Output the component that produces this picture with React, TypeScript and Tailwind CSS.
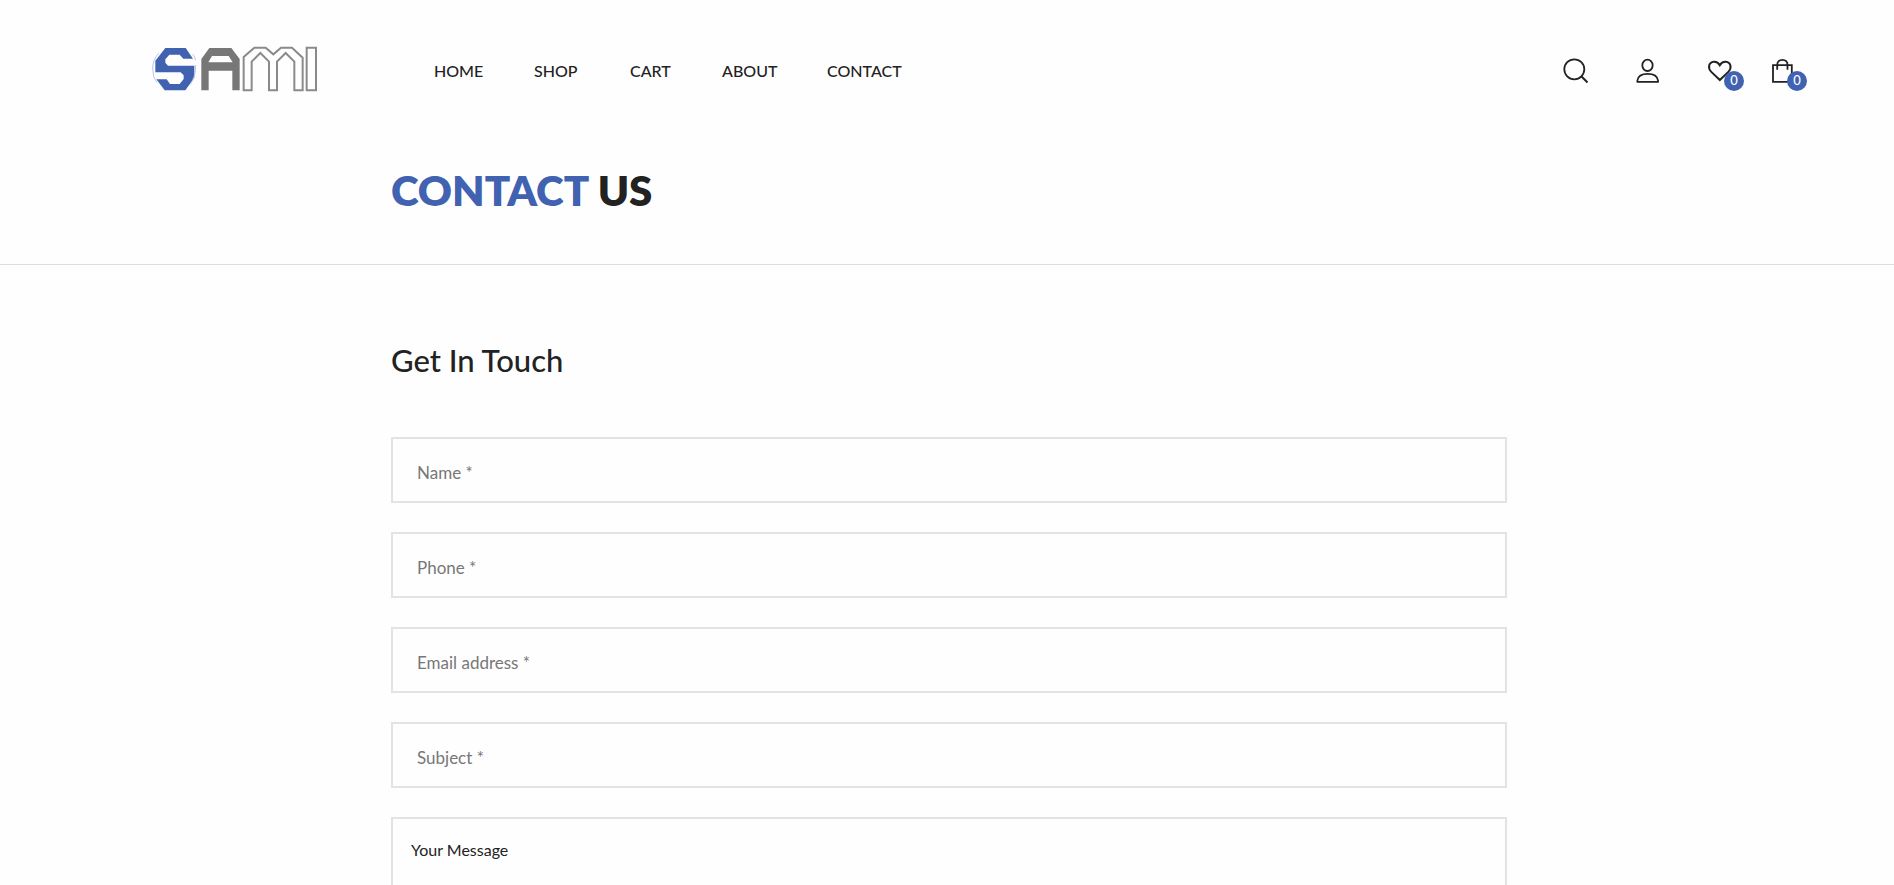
import React from "react";

const navItems = ["HOME", "SHOP", "CART", "ABOUT", "CONTACT"];

const fields = [
  { id: "name", label: "Name *", type: "text" },
  { id: "phone", label: "Phone *", type: "tel" },
  { id: "email", label: "Email address *", type: "email" },
  { id: "subject", label: "Subject *", type: "text" },
];

function Logo() {
  return (
    <svg viewBox="0 0 570 210" className="h-[70px] w-[190px]" aria-hidden="true">
      <path
        fill="#4062b1"
        d="M76 39H137L159 71H130L119 59H88L76 73V83L84 92H163V128L136 166H74L49 133H80L90 147H119L131 132V121L122 112H46V77Z"
      />
      <path fill="none" stroke="#b9c6e6" strokeWidth="3" d="M56 55Q38 74 38 102Q38 126 50 142M158 58Q165 66 167 76M167 90Q168 125 150 149" />
      <path
        fill="#777"
        fillRule="evenodd"
        d="M184 166V72L208 39H274L299 72V166H277V107H206V166ZM205 82H278L266 63H216Z"
      />
      <path
        fill="none"
        stroke="#8a8a8a"
        strokeWidth="6"
        d="M311 166V66L343 38H377L400 58L423 38H456L488 68V166H463V80L437 54L411 80V166H387V80L361 54L335 80V166ZM500 38H528V166H500Z"
      />
    </svg>
  );
}

function Badge() {
  return (
    <span className="absolute top-3 left-[17px] flex size-5 items-center justify-center rounded-full bg-[#4062b1] text-[13px] font-medium text-white">
      0
    </span>
  );
}

function Icon({ children }: { children: React.ReactNode }) {
  return (
    <svg viewBox="0 0 24 24" className="size-6 overflow-visible" fill="none" stroke="#222" strokeWidth="1.8" aria-hidden="true">
      {children}
    </svg>
  );
}

export default function App() {
  return (
    <div className="min-h-screen bg-[#fefefe] font-[Lato,sans-serif] text-[#222]">
      <header className="flex h-[140px] items-center pr-[100px] pl-[140px]">
        <a href="#home" aria-label="Sami">
          <Logo />
        </a>
        <nav className="ml-[104px] grid grid-cols-[100px_96px_92px_105px_auto] pt-0.5 text-base font-medium">
          {navItems.map((item) => (
            <a key={item} href={"#" + item.toLowerCase()}>
              {item}
            </a>
          ))}
        </nav>
        <div className="ml-auto flex gap-12 pt-0.5">
          <button type="button" aria-label="Search">
            <Icon>
              <circle cx="11.3" cy="10.3" r="10" />
              <path strokeWidth="2" d="M18.3 17.3L24.5 23.5" />
            </Icon>
          </button>
          <a href="#account" aria-label="Account">
            <Icon>
              <ellipse cx="12.5" cy="6.3" rx="5.2" ry="5.7" />
              <path strokeLinejoin="round" d="M2.4 22.9V21.5C3 17 7 14.8 12.7 14.8S22.4 17 23 21.5V22.9Z" />
            </Icon>
          </a>
          <div className="flex gap-[39px]">
            <a href="#wishlist" aria-label="Wishlist" className="relative">
              <Icon>
                <path
                  strokeWidth="2"
                  d="M12.8 21L4.3 12.9C.5 9.1 1.6 3.2 6.8 2.7C9.6 2.5 11.6 4 12.8 6.2C14 4 16 2.5 18.8 2.7C24 3.2 25.1 9.1 21.3 12.9Z"
                />
              </Icon>
              <Badge />
            </a>
            <a href="#bag" aria-label="Shopping bag" className="relative">
              <Icon>
                <path d="M3 6.2H21.8V22.8H3ZM7.2 10.8V6C7.2 2.6 9.4 .9 12.3 .9S17.5 2.6 17.5 6V10.8" />
              </Icon>
              <Badge />
            </a>
          </div>
        </div>
      </header>

      <section className="h-[125px] border-b border-[#dedede]">
        <div className="mx-auto max-w-[1120px] pt-6 pl-1">
          <h1 className="text-[42px] leading-[52px] font-extrabold">
            <span className="text-[#4062b1]">CONTACT</span> US
          </h1>
        </div>
      </section>

      <main className="mx-auto max-w-[1120px] pt-[75px] pb-20 pl-1">
        <h2 className="text-[31px] leading-10 font-medium">Get In Touch</h2>
        <form className="mt-[57px] flex flex-col gap-[29px]">
          {fields.map((f) => (
            <input
              key={f.id}
              id={f.id}
              type={f.type}
              aria-label={f.label}
              placeholder={f.label}
              className="h-[66px] w-full border-2 border-[#e3e3e3] px-6 pt-1 text-[17px] placeholder:text-[#777]"
            />
          ))}
          <textarea
            aria-label="Your Message"
            defaultValue="Your Message"
            className="h-[200px] w-full resize-none border-2 border-[#e3e3e3] px-[18px] py-[19px] text-base"
          />
        </form>
      </main>
    </div>
  );
}
